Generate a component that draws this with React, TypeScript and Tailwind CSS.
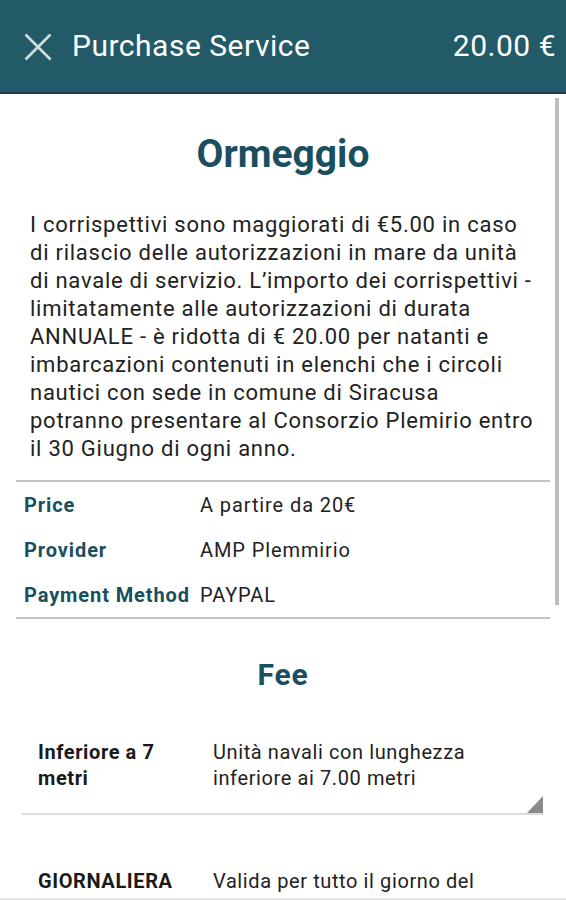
import React from "react";

const paragraph = [
  "I corrispettivi sono maggiorati di €5.00 in caso",
  "di rilascio delle autorizzazioni in mare da unità",
  "di navale di servizio. L’importo dei corrispettivi -",
  "limitatamente alle autorizzazioni di durata",
  "ANNUALE - è ridotta di € 20.00 per natanti e",
  "imbarcazioni contenuti in elenchi che i circoli",
  "nautici con sede in comune di Siracusa",
  "potranno presentare al Consorzio Plemirio entro",
  "il 30 Giugno di ogni anno.",
];

export default function App() {
  const font = { fontFamily: "Roboto, 'Noto Sans', sans-serif" };
  return (
    <div className="relative w-[566px] h-[900px] overflow-hidden bg-white" style={font}>
      {/* Header */}
      <div className="h-[94px] bg-[#235a68] border-b-2 border-[#163f4a] flex items-center pl-[24px] pr-[10px]">
        <svg width="28" height="28" viewBox="0 0 28 28" className="mt-[1px]">
          <line x1="1.5" y1="1.5" x2="26.5" y2="26.5" stroke="#cfdde0" strokeWidth="2.6" />
          <line x1="26.5" y1="1.5" x2="1.5" y2="26.5" stroke="#cfdde0" strokeWidth="2.6" />
        </svg>
        <div className="ml-[20px] text-[30px] tracking-[0.5px] text-white leading-none flex-1">Purchase Service</div>
        <div className="text-[30px] tracking-[0.5px] text-white leading-none">20.00 €</div>
      </div>

      {/* Body */}
      <div className="pt-[38px]">
        <h1 className="text-center text-[39px] leading-[44px] font-bold text-[#1b4f5f]">Ormeggio</h1>
        <p className="mt-[35px] ml-[30px] w-[510px] text-[22px] tracking-[0.75px] leading-[28px] text-[#222]">
          {paragraph.map((l) => (
            <span key={l} className="block whitespace-nowrap">{l}</span>
          ))}
        </p>

        <div className="mt-[17px] mx-[16px] w-[534px] border-t-2 border-b-2 border-[#c4c4c4]">
          {[
            ["Price", "A partire da 20€"],
            ["Provider", "AMP Plemmirio"],
            ["Payment Method", "PAYPAL"],
          ].map(([k, v]) => (
            <div key={k} className="flex h-[45px] items-center text-[20px] tracking-[0.9px]">
              <div className="w-[184px] pl-[8px] font-bold text-[#1b4f5f]">{k}</div>
              <div className="text-[#222]">{v}</div>
            </div>
          ))}
        </div>

        <h2 className="mt-[38px] text-center text-[30px] tracking-[0.8px] leading-[36px] font-bold text-[#1b4f5f]">Fee</h2>

        <div className="mx-[22px] w-[521px]">
          <div className="relative flex pt-[46px] pb-[22px] border-b-2 border-[#dcdcdc] text-[20px] tracking-[0.6px] leading-[26px]">
            <div className="w-[191px] pl-[16px] pr-[10px] font-bold text-[#1a1a1a]">Inferiore a 7 metri</div>
            <div className="w-[292px] text-[#222]">Unità navali con lunghezza inferiore ai 7.00 metri</div>
            <div className="absolute right-0 bottom-0 w-0 h-0 border-l-[16px] border-l-transparent border-b-[17px] border-b-[#8a8a8a]" />
          </div>
          <div className="flex pt-[53px] text-[20px] tracking-[0.6px] leading-[26px]">
            <div className="w-[191px] pl-[16px] pr-[10px] font-bold text-[#1a1a1a]">GIORNALIERA</div>
            <div className="w-[292px] text-[#222]">Valida per tutto il giorno del rilascio</div>
          </div>
        </div>
      </div>

      {/* Scrollbar */}
      <div className="absolute left-[555px] top-[98px] w-[4px] h-[507px] bg-[#bdbdbd]" />
      <div className="absolute left-0 right-0 bottom-0 h-[2px] bg-[#e6e6e6]" />
    </div>
  );
}
